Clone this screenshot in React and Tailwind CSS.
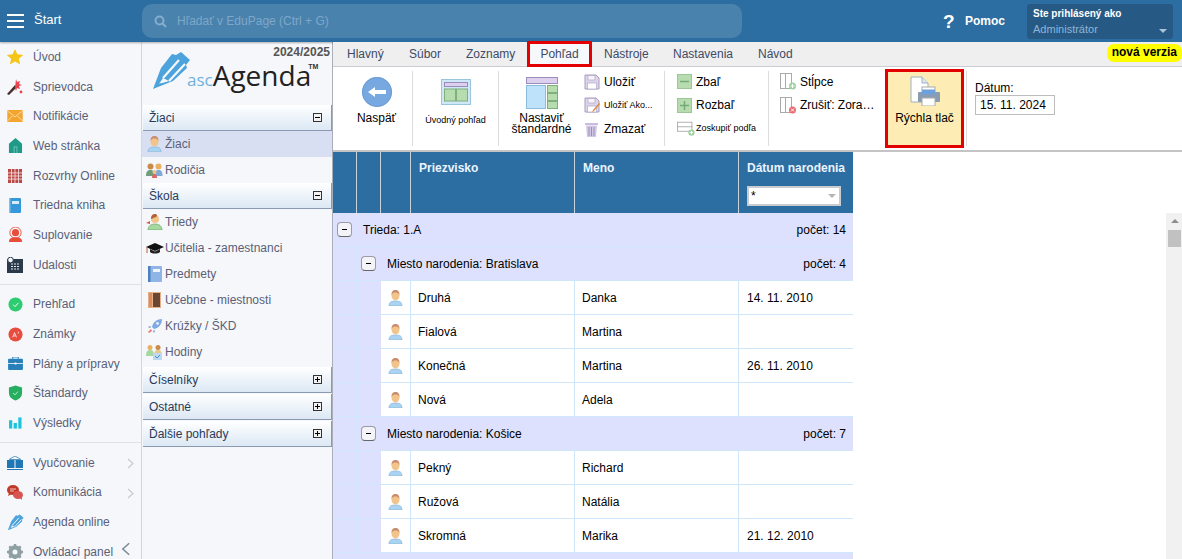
import React from "react";

const Star = () => (
  <svg width="18" height="18" viewBox="0 0 18 18"><path d="M9 1l2.4 5.3 5.8.6-4.3 3.9 1.2 5.7L9 13.6l-5.1 2.9 1.2-5.7L.8 6.9l5.8-.6z" fill="#f5c518" /></svg>
);
const Wand = () => (
  <svg width="18" height="18" viewBox="0 0 18 18"><path d="M1 16L9 7l2 2-8 8z" fill="#4a2c2a" /><path d="M10 1l1 3 3-1-1 3 3 1-3 1 1 3-3-1-1 3-1-3" fill="#e8434f" /><circle cx="15" cy="14" r="1.4" fill="#e8434f" /></svg>
);
const Mail = () => (
  <svg width="16" height="12" viewBox="0 0 18 14"><rect width="18" height="14" fill="#f3a530" /><path d="M0 1l9 7 9-7M0 13l6-6M18 13l-6-6" stroke="#fde3b0" fill="none" /></svg>
);
const House = () => (
  <svg width="15" height="15" viewBox="0 0 16 16"><path d="M8 0l7 6v10H1V6z" fill="#1e9a86" /><rect x="6" y="9" width="4" height="7" fill="#6fc4b6" /><rect x="7" y="10" width="2" height="6" fill="#1e9a86" /></svg>
);
const Timetable = () => (
  <svg width="14" height="14" viewBox="0 0 16 16"><rect width="16" height="16" fill="#b94a48" /><path d="M0 4.5h16M0 8h16M0 11.500h16M4 0v16M8 0v16M12 0v16" stroke="#f6dcdc" /></svg>
);
const Notebook = () => (
  <svg width="12" height="15" viewBox="0 0 12 15"><rect width="12" height="15" rx="1" fill="#3498db" /><rect x="3" y="3" width="7" height="3" fill="#d6ecfa" /><rect x="0" y="0" width="1.500" height="15" fill="#7cc0ee" /></svg>
);
const Substitute = () => (
  <svg width="15" height="15" viewBox="0 0 16 16"><circle cx="8" cy="6" r="6" fill="none" stroke="#e74c3c" /><circle cx="8" cy="6" r="3.800" fill="#e74c3c" /><path d="M1 16c0-4 3-5 7-5s7 1 7 5z" fill="#e74c3c" /></svg>
);
const CalendarDark = () => (
  <svg width="16" height="16" viewBox="0 0 16 16"><rect y="2" width="16" height="14" fill="#2b3a4a" /><path d="M4 7h9M4 9.500h9M4 12h9" stroke="#dfe6ec" strokeDasharray="2 1" /><circle cx="3.500" cy="3" r="2.800" fill="#f5f7fa" stroke="#2b3a4a" /></svg>
);
const CheckCircle = () => (
  <svg width="15" height="15" viewBox="0 0 16 16"><circle cx="8" cy="8" r="7.500" fill="#2ecc71" /><path d="M5.500 8.200l2 2 3.500-4" stroke="#fff" fill="none" /></svg>
);
const GradeCircle = () => (
  <svg width="15" height="15" viewBox="0 0 16 16"><circle cx="8" cy="8" r="7.500" fill="#e74c3c" /><path d="M5 11l2-5 2 5M6 9.500h2M11 5v2" stroke="#fde" fill="none" /></svg>
);
const Briefcase = () => (
  <svg width="15" height="13" viewBox="0 0 16 14"><path d="M5 2V0h6v2" fill="none" stroke="#2980b9" /><rect y="2" width="16" height="12" rx="1" fill="#2980b9" /><path d="M0 7h16" stroke="#d6ecfa" /><rect x="7" y="6" width="2" height="2" fill="#fff" /></svg>
);
const Shield = () => (
  <svg width="15" height="16" viewBox="0 0 16 16"><path d="M8 0l7 2v6c0 4-3 6.500-7 8-4-1.500-7-4-7-8V2z" fill="#27ae60" /><path d="M5.500 8l2 2 3-3.500" stroke="#bdf0d2" fill="none" /></svg>
);
const Bars = () => (
  <svg width="13" height="12" viewBox="0 0 14 12"><rect y="3" width="3.500" height="9" fill="#1cc3dc" /><rect x="5" y="6" width="3.500" height="6" fill="#1cc3dc" /><rect x="10" width="3.500" height="12" fill="#1cc3dc" /></svg>
);
const BookOpen = () => (
  <svg width="16" height="14" viewBox="0 0 16 14"><path d="M8 0l6 3.500H2z" fill="none" stroke="#5a9ac8" /><path d="M0 4h7.500v8H0zM8.500 4H16v8H8.500z" fill="#1f78b4" /><path d="M0 13.500h16" stroke="#1f78b4" /></svg>
);
const Bubbles = () => (
  <svg width="16" height="15" viewBox="0 0 16 15"><ellipse cx="6" cy="5" rx="6" ry="5" fill="#c0392b" /><path d="M2 8l-1 3 4-2z" fill="#c0392b" /><ellipse cx="11" cy="10" rx="5" ry="4" fill="#d9534f" /><path d="M13 13l2 2v-3z" fill="#d9534f" /><path d="M3 4h6M3 6h4" stroke="#f5c6c2" /></svg>
);
const Pencil = ({ size = 40 }) => (
  <svg width={size} height={size} viewBox="0 0 40 40">
    <path d="M2 38L10 17 21 3l4 1 5-3 9 8-4 5 1 3-14 13z" fill="#4da3dc" />
    <path d="M12 27L28 9M18 30L34 13" stroke="#f5f7fa" strokeWidth="2.200" fill="none" />
    <path d="M8 33l4-6 6 3z" fill="#f5f7fa" />
    <path d="M7 35l2-3 2 1z" fill="#4da3dc" />
  </svg>
);
const Gear = () => (
  <svg width="16" height="16" viewBox="0 0 16 16"><circle cx="8" cy="8" r="5" fill="none" stroke="#8fa0a4" strokeWidth="3.500" /><path d="M8 0v16M0 8h16M2.300 2.300l11.400 11.400M13.700 2.300L2.300 13.700" stroke="#8fa0a4" strokeWidth="2.400" /><circle cx="8" cy="8" r="2.500" fill="#f5f7fa" /></svg>
);

const Person = ({ shirt = "#a9d3f0", skin = "#f0c48a", hair = "#c98a6a" }) => (
  <svg width="15" height="16" viewBox="0 0 15 16">
    <path d="M1 16c0-4 2-5 6.500-5S14 12 14 16z" fill={shirt} stroke="#7fb0d4" strokeWidth=".6" />
    <ellipse cx="7.500" cy="5.500" rx="4" ry="5" fill={skin} />
    <path d="M3.500 5C3.500 1 5.500 0 7.500 0s4 1 4 5c-1-2-2-2.500-4-2.500S4.500 3 3.500 5z" fill={hair} />
  </svg>
);
const Parents = () => (
  <svg width="17" height="15" viewBox="0 0 17 15"><circle cx="4.500" cy="3.500" r="3" fill="#c98a4a" /><path d="M0 13c0-5 2-6 4.500-6S8 8 8 13z" fill="#6f9f7a" /><circle cx="12.500" cy="3.500" r="3" fill="#e8b060" /><path d="M9 13c0-5 1-6 3.500-6S16.500 8 16.500 13z" fill="#7fa9d9" /><circle cx="8.500" cy="9" r="2" fill="#f0c48a" /><path d="M6 15c0-3 1-4 2.500-4s2.500 1 2.500 4z" fill="#e06666" /></svg>
);
const Teacher = () => (
  <svg width="17" height="16" viewBox="0 0 17 16"><circle cx="9" cy="5" r="4" fill="#f0c48a" /><path d="M5 5c0-4 2-5 4-5s3 2 1 3-3 1-5 2z" fill="#b5623a" /><path d="M2 16c0-4 3-6 7-6s7 2 7 6z" fill="#a6d9a0" stroke="#5a9a55" strokeWidth=".6" /><path d="M0 9l4-2v3z" fill="#d9534f" /></svg>
);
const GradCap = () => (
  <svg width="18" height="13" viewBox="0 0 18 13"><path d="M0 5l9-4 9 4-9 4z" fill="#111" /><path d="M4 7v3c2 2 8 2 10 0V7L9 9.500z" fill="#222" /><path d="M1 5v6" stroke="#b5623a" /></svg>
);
const Book = () => (
  <svg width="14" height="16" viewBox="0 0 14 16"><rect width="14" height="16" rx="1" fill="#8fb4e6" /><rect width="2.500" height="16" fill="#4f7fc0" /><rect x="5" y="3" width="7" height="3" fill="#eef4fc" /></svg>
);
const Door = () => (
  <svg width="13" height="16" viewBox="0 0 13 16"><rect width="13" height="16" fill="#e7b08a" /><rect x="5" y="1" width="7" height="14" fill="#6b4630" /><rect x="1" y="1" width="3" height="14" fill="#d98d5f" /></svg>
);
const Rocket = () => (
  <svg width="16" height="16" viewBox="0 0 16 16"><path d="M15 1c-5 0-9 3-10 8l2 2c5-1 8-5 8-10z" fill="#7fa9e6" /><circle cx="10.500" cy="5.500" r="1.400" fill="#e8f0fc" /><path d="M4 8L1 9l2 1zM8 12l-1 3-1-2z" fill="#5d89cf" /><path d="M4 11l-3 3 1 1 3-2z" fill="#e8796a" /></svg>
);
const Lessons = () => (
  <svg width="17" height="16" viewBox="0 0 17 16"><circle cx="4" cy="3.500" r="2.500" fill="#e8b060" /><circle cx="12" cy="3.500" r="2.500" fill="#c98a4a" /><path d="M0 12c0-5 1.500-6 4-6s4 1 4 6z" fill="#a6d9a0" /><path d="M8 12c0-5 1.500-6 4-6s4 1 4 6z" fill="#e8c98a" /><rect x="7" y="9" width="9" height="7" fill="#bcd8f2" /><path d="M9 12l2 2 3-3" stroke="#4a8fd0" fill="none" /></svg>
);

const navGroups = [
  [
    ["Úvod", <Star />],
    ["Sprievodca", <Wand />],
    ["Notifikácie", <Mail />],
    ["Web stránka", <House />],
    ["Rozvrhy Online", <Timetable />],
    ["Triedna kniha", <Notebook />],
    ["Suplovanie", <Substitute />],
    ["Udalosti", <CalendarDark />],
  ],
  [
    ["Prehľad", <CheckCircle />],
    ["Známky", <GradeCircle />],
    ["Plány a prípravy", <Briefcase />],
    ["Štandardy", <Shield />],
    ["Výsledky", <Bars />],
  ],
  [
    ["Vyučovanie", <BookOpen />, true],
    ["Komunikácia", <Bubbles />, true],
    ["Agenda online", <Pencil size={17} />],
    ["Ovládací panel", <Gear />],
  ],
];

const Chevron = ({ big }) => (
  <svg width={big ? 10 : 7} height={big ? 14 : 11} viewBox="0 0 7 11" fill="none" stroke={big ? "#7c8a96" : "#c6ccd2"} strokeWidth="1.200"><path d={big ? "M6 1L1 5.500 6 10" : "M1 1l5 4.500L1 10"} /></svg>
);

const SideNav = () => (
  <div className="w-[142px] shrink-0 h-full bg-[#f5f7fa] border-r border-[#d4d7da] text-[12px] text-[#5b5f78]">
    {navGroups.map((group, i) => (
      <div key={i} className={i > 0 ? "border-t border-[#dfe2e5] mt-[4px] pt-[5px]" : ""}>
        {group.map(([label, icon, arrow]) => (
          <div key={label} className="relative flex items-center h-[29.7px]">
            <span className="w-[33px] shrink-0 flex justify-center pr-[3px]">{icon}</span>
            <span className="whitespace-nowrap">{label}</span>
            {arrow && (
              <span className="absolute left-[127px] top-[10px]"><Chevron /></span>
            )}
            {label === "Ovládací panel" && (
              <span className="absolute left-[121px] top-[5px]"><Chevron big /></span>
            )}
          </div>
        ))}
      </div>
    ))}
  </div>
);

const Toggle = ({ open }) => (
  <span className="w-[7px] h-[7px] border border-[#333] bg-[#f2f2f2] relative block box-content">
    <span className="absolute left-[1px] right-[1px] top-[3px] h-px bg-black" />
    {!open && <span className="absolute top-[1px] bottom-[1px] left-[3px] w-px bg-black" />}
  </span>
);

const PanelHead = ({ label, open, className = "" }) => (
  <div className={`h-[26px] pl-[6px] pr-[3px] ml-px flex items-center justify-between text-[12px] text-[#283a5a] bg-gradient-to-b from-white to-[#dce8f4] border-b border-r border-[#8a9ab0] ${className}`}>
    <span>{label}</span>
    <span className="mr-[6px]"><Toggle open={open} /></span>
  </div>
);

const PanelItem = ({ label, icon, active }) => (
  <div className={`h-[26px] flex items-center text-[12px] text-[#5b5f78] ${active ? "bg-[#d8dff3]" : ""}`}>
    <span className="w-[23px] shrink-0 flex justify-center pl-[2px]">{icon}</span>
    <span className="whitespace-nowrap">{label}</span>
  </div>
);

const Logo = () => (
  <div className="relative h-[63px]">
    <span className="absolute right-[2px] top-[3px] text-[12px] font-bold text-[#555] leading-[14px]">2024/2025</span>
    <div className="absolute left-[9px] top-[9px] flex items-end">
      <Pencil />
      <span className="text-[#6fb0e0] text-[17px] leading-[20px] -ml-[4px] mb-[1px] font-['Open_Sans',sans-serif]">asc</span>
      <span className="text-[#222] text-[28px] leading-[24px] mb-[4px] font-['Open_Sans',sans-serif]">Agenda</span>
      <span className="text-[#333] text-[7px] font-bold self-start mt-[11px] leading-[9px] -ml-[3px]">TM</span>
    </div>
  </div>
);

const Panel = () => (
  <div className="w-[191px] shrink-0 h-full bg-[#f5f7fa] border-r border-[#a9aeb8]">
    <Logo />
    <PanelHead label="Žiaci" open />
    <PanelItem label="Žiaci" icon={<Person />} active />
    <PanelItem label="Rodičia" icon={<Parents />} />
    <PanelHead label="Škola" open />
    <PanelItem label="Triedy" icon={<Teacher />} />
    <PanelItem label="Učitelia - zamestnanci" icon={<GradCap />} />
    <PanelItem label="Predmety" icon={<Book />} />
    <PanelItem label="Učebne - miestnosti" icon={<Door />} />
    <PanelItem label="Krúžky / ŠKD" icon={<Rocket />} />
    <PanelItem label="Hodiny" icon={<Lessons />} />
    <div className="h-[2px]" />
    <PanelHead label="Číselníky" className="mb-px" />
    <PanelHead label="Ostatné" className="mb-px" />
    <PanelHead label="Ďalšie pohľady" />
  </div>
);

const tabs = [
  ["Hlavný", "ml-[14px] w-[62px]"],
  ["Súbor", "w-[57px]"],
  ["Zoznamy", "w-[61px]"],
];

const Tabs = () => (
  <div className="relative h-[25px] bg-[#efefef] border-b border-[#c9ccd0] flex items-center text-[12px] text-[#3e4a66]">
    {tabs.map(([t, c]) => (
      <span key={t} className={`${c} shrink-0`}>{t}</span>
    ))}
    <span className="w-[65px] h-[26px] shrink-0 border-[3px] border-[#e30000] bg-[#f7f8fc] flex items-center justify-center">Pohľad</span>
    <span className="ml-[12px] w-[69px] shrink-0">Nástroje</span>
    <span className="w-[85px] shrink-0">Nastavenia</span>
    <span>Návod</span>
    <span className="absolute right-0 top-[2px] h-[18px] px-[5px] rounded-[7px] bg-[#ffff00] text-black font-bold text-[12px] leading-[16px]">nová verzia</span>
  </div>
);

const Sep = () => <div className="w-px h-[75px] bg-[#dcdcdc] shrink-0 mt-[4px]" />;

const BackIcon = () => (
  <svg width="30" height="30" viewBox="0 0 30 30"><circle cx="15" cy="15" r="15" fill="#78a8e0" /><circle cx="15" cy="15" r="14.500" fill="none" stroke="#6c9cd4" /><path d="M6 15l7-5v3h11v4H13v3z" fill="#fff" /></svg>
);
const LayoutIcon = () => (
  <svg width="30" height="26" viewBox="0 0 30 26"><rect x=".5" y=".5" width="29" height="25" fill="#cfe8f8" stroke="#9cc4dc" /><rect x="3.500" y="3.500" width="23" height="4" fill="#dcd0ee" stroke="#9a8dbb" /><rect x="3.500" y="10" width="11" height="12" fill="#b6dcb0" stroke="#7fb07a" /><rect x="15.500" y="10" width="11" height="12" fill="#b6dcb0" stroke="#7fb07a" /></svg>
);
const StandardIcon = () => (
  <svg width="32" height="32" viewBox="0 0 32 32"><rect x=".5" y=".5" width="31" height="6" fill="#dcd0ee" stroke="#9a8dbb" /><rect x=".5" y="8.500" width="19" height="23" fill="#bfe2fb" stroke="#8cbcdc" /><rect x="21.500" y="8.500" width="10" height="7" fill="#b6dcb0" stroke="#7fb07a" /><rect x="21.500" y="16.500" width="10" height="7" fill="#b6dcb0" stroke="#7fb07a" /><rect x="21.500" y="24.500" width="10" height="7" fill="#b6dcb0" stroke="#7fb07a" /></svg>
);
const Floppy = ({ edit }) => (
  <svg width="16" height="16" viewBox="0 0 16 16"><path d="M1 1h11l3 3v11H1z" fill="#ddd6ea" stroke="#a89cc0" /><rect x="4" y="1.500" width="7" height="4.500" fill="#f6f4fa" stroke="#a89cc0" strokeWidth=".6" /><rect x="3.500" y="9" width="9" height="6" fill="#fff" stroke="#a89cc0" strokeWidth=".6" />{edit && <path d="M9 13l6-7 1 1-6 7-2 1z" fill="#d98a3a" />}</svg>
);
const Trash = () => (
  <svg width="15" height="16" viewBox="0 0 15 16"><rect x="1" y="2" width="13" height="2" fill="#c9bcdc" /><path d="M2 4.500h11L12 16H3z" fill="#d3c8e4" /><path d="M5 6v9M7.500 6v9M10 6v9" stroke="#9a8dbb" /></svg>
);
const SquareBtn = ({ plus }) => (
  <svg width="15" height="15" viewBox="0 0 15 15"><rect x=".5" y=".5" width="14" height="14" fill="#b6dcb0" stroke="#9cc69a" /><path d={plus ? "M3 7.500h9M7.500 3v9" : "M3 7.500h9"} stroke="#78a878" strokeWidth="1.500" /></svg>
);
const GroupIcon = () => (
  <svg width="21" height="16" viewBox="0 0 21 16"><rect x=".5" y=".5" width="16" height="10" fill="#fff" stroke="#aaa" /><path d="M0 5.500h17" stroke="#aaa" /><circle cx="16" cy="12" r="3.500" fill="#9ed0a0" /><path d="M14 12h4M16 10v4" stroke="#fff" /></svg>
);
const ColumnsIcon = ({ red }) => (
  <svg width="16" height="17" viewBox="0 0 16 17"><rect x=".5" y=".5" width="5" height="15" fill="#fff" stroke="#aaa" /><rect x="5.500" y=".5" width="6" height="15" fill="#fff" stroke="#aaa" /><circle cx="12.500" cy="13" r="3.500" fill={red ? "#ea6a72" : "#9ed0a0"} /><path d={red ? "M11 11.500l3 3M14 11.500l-3 3" : "M10.500 13h4M12.500 11v4"} stroke="#fff" /></svg>
);
const PrintIcon = () => (
  <svg width="30" height="30" viewBox="0 0 30 30"><path d="M1 1h11l6 6v19H1z" fill="#fff" stroke="#9bb0c4" /><path d="M12 1v6h6" fill="#dfe8f2" stroke="#9bb0c4" /><rect x="12" y="11" width="13" height="6" fill="#fff" stroke="#aaa" /><rect x="8" y="16" width="22" height="10" rx="1" fill="#8a9cb0" /><rect x="12" y="13.500" width="13" height="5" fill="#6ea0dc" /><rect x="12" y="22" width="13" height="8" fill="#fff" stroke="#aaa" /></svg>
);

const SmallRow = ({ icon, label, small, iconW = "w-[22px]" }) => (
  <div className="flex items-center h-[23.5px]">
    <span className={`${iconW} shrink-0 flex justify-start`}>{icon}</span>
    <span className={`whitespace-nowrap ${small ? "text-[9px]" : "text-[12px]"}`}>{label}</span>
  </div>
);

const Ribbon = () => (
  <div className="h-[85px] bg-white border-b-[2px] border-[#c4c4c4] flex items-start text-black">
    <div className="w-[79px] shrink-0 flex flex-col items-center pt-[10px] pl-[8px]">
      <BackIcon />
      <span className="text-[12px] mt-[4px] leading-[14px]">Naspäť</span>
    </div>
    <Sep />
    <div className="w-[85px] shrink-0 flex flex-col items-center pt-[12px]">
      <LayoutIcon />
      <span className="text-[9px] mt-[9px] leading-[12px] whitespace-nowrap">Úvodný pohľad</span>
    </div>
    <Sep />
    <div className="w-[83px] shrink-0 flex flex-col items-center pt-[10px] pl-[2px]">
      <StandardIcon />
      <span className="text-[12px] mt-[4px] leading-[11px] text-center">Nastaviť<br />štandardné</span>
    </div>
    <div className="w-[82px] shrink-0 pt-[3px] pl-[2px]">
      <SmallRow icon={<Floppy />} label="Uložiť" iconW="w-[20px]" />
      <SmallRow icon={<Floppy edit />} label="Uložiť Ako..." small iconW="w-[20px]" />
      <SmallRow icon={<Trash />} label="Zmazať" iconW="w-[20px]" />
    </div>
    <Sep />
    <div className="w-[103px] shrink-0 pt-[3px] pl-[12px]">
      <SmallRow icon={<SquareBtn />} label="Zbaľ" iconW="w-[19px]" />
      <SmallRow icon={<SquareBtn plus />} label="Rozbaľ" iconW="w-[19px]" />
      <SmallRow icon={<GroupIcon />} label="Zoskupiť podľa" small iconW="w-[19px]" />
    </div>
    <Sep />
    <div className="w-[116px] shrink-0 pt-[3px] pl-[11px]">
      <SmallRow icon={<ColumnsIcon />} label="Stĺpce" iconW="w-[20px]" />
      <SmallRow icon={<ColumnsIcon red />} label="Zrušiť: Zora…" iconW="w-[20px]" />
    </div>
    <div className="w-[79px] h-[79px] mt-[2px] shrink-0 border-[3px] border-[#e30000] bg-[#fdedb4] flex flex-col items-center pt-[4px]">
      <PrintIcon />
      <span className="text-[12px] mt-[5px] leading-[14px] whitespace-nowrap">Rýchla tlač</span>
    </div>
    <div className="w-px h-[75px] bg-[#dcdcdc] shrink-0 mt-[4px] ml-[2px]" />
    <div className="pl-[8px] pt-[15px] text-[12px]">
      <div className="leading-[13px]">Dátum:</div>
      <div className="w-[80px] h-[20px] border border-[#bdbdbd] pl-[4px] leading-[18px]">15. 11. 2024</div>
    </div>
  </div>
);

const headCols = ["w-[24px]", "w-[24px]", "w-[30px]"];

const TableHead = () => (
  <div className="flex h-[61px] bg-[#2d6ea2] text-[#eaf4ff] text-[12px] font-bold">
    {headCols.map((w, i) => (
      <div key={i} className={`${w} shrink-0 border-r border-[#c9d3dc]`} />
    ))}
    <div className="w-[164px] shrink-0 border-r border-[#c9d3dc] pl-[8px] pt-[9px] leading-[15px]">Priezvisko</div>
    <div className="w-[164px] shrink-0 border-r border-[#c9d3dc] pl-[8px] pt-[9px] leading-[15px]">Meno</div>
    <div className="flex-1 pl-[8px] pt-[9px] leading-[15px] whitespace-nowrap">
      Dátum narodenia
      <div className="relative w-[94px] h-[20px] mt-[10px] bg-white border-[2px] border-[#c8ccd0] text-black font-normal pl-[2px] pt-[1px] leading-[14px]">
        *
        <span className="absolute right-[3px] top-[6px] w-0 h-0 border-x-[4px] border-x-transparent border-t-[4px] border-t-[#b5b5b5]" />
      </div>
    </div>
  </div>
);

const Minus = () => (
  <span className="w-[15px] h-[15px] rounded-[4px] bg-[#f4f4f8] border border-[#9a9aa8] border-b-[#666] flex items-center justify-center shrink-0">
    <span className="w-[5px] h-px bg-black" />
  </span>
);

const Group = ({ label, count, level }) => (
  <div className="flex items-center h-[34px] bg-[#dde1fd] border-b border-[#cfe6fb] text-[12px] text-black">
    {level === 1 && <div className="w-[24px] h-full shrink-0 border-r border-[#cfe6fb]" />}
    <span className="ml-[4px]"><Minus /></span>
    <span className="ml-[11px]">{label}</span>
    <span className="ml-auto mr-[7px]">počet: {count}</span>
  </div>
);

const Row = ({ last, first, date }) => (
  <div className="flex h-[34px] text-[12px] text-black bg-white border-b border-[#cfe6fb]">
    <div className="w-[24px] shrink-0 bg-[#dde1fd] border-r border-[#cfe6fb]" />
    <div className="w-[24px] shrink-0 bg-[#dde1fd]" />
    <div className="w-[30px] shrink-0 border-r border-[#cfe6fb] flex items-center justify-center"><Person /></div>
    <div className="w-[164px] shrink-0 border-r border-[#cfe6fb] pl-[7px] flex items-center">{last}</div>
    <div className="w-[164px] shrink-0 border-r border-[#cfe6fb] pl-[7px] flex items-center">{first}</div>
    <div className="flex-1 pl-[8px] flex items-center">{date}</div>
  </div>
);

const Table = () => (
  <div className="w-[520px] shrink-0">
    <TableHead />
    <Group label="Trieda: 1.A" count="14" level={0} />
    <Group label="Miesto narodenia: Bratislava" count="4" level={1} />
    <Row last="Druhá" first="Danka" date="14. 11. 2010" />
    <Row last="Fialová" first="Martina" />
    <Row last="Konečná" first="Martina" date="26. 11. 2010" />
    <Row last="Nová" first="Adela" />
    <Group label="Miesto narodenia: Košice" count="7" level={1} />
    <Row last="Pekný" first="Richard" />
    <Row last="Ružová" first="Natália" />
    <Row last="Skromná" first="Marika" date="21. 12. 2010" />
    <div className="h-[34px] bg-[#dde1fd]" />
  </div>
);

const Scrollbar = () => (
  <div className="w-[16px] mt-[61px] bg-[#f1f1f1] flex flex-col items-center shrink-0 pt-[6px] pl-[1px]">
    <span className="w-0 h-0 border-x-[4px] border-x-transparent border-b-[4px] border-b-[#8e8e8e]" />
    <span className="w-[13px] h-[17px] bg-[#c1c1c1] mt-[7px]" />
  </div>
);

const TopBar = () => (
  <div className="h-[42px] shrink-0 bg-[#2d6ea2] flex items-center text-white shadow-[0_1px_2px_rgba(0,0,0,0.3)] relative">
    <div className="w-[142px] shrink-0 flex items-center pl-[7px]">
      <div className="w-[17px] flex flex-col gap-[4px] mr-[10px]">
        <span className="h-[2px] bg-white block" />
        <span className="h-[2px] bg-white block" />
        <span className="h-[2px] bg-white block" />
      </div>
      <span className="text-[13px] -mt-[2px]">Štart</span>
    </div>
    <div className="w-[600px] h-[34px] rounded-[10px] bg-[#4a82ae] flex items-center pl-[12px] text-[12px] text-[#7ea7c8] shrink-0">
      <svg width="13" height="13" viewBox="0 0 13 13" fill="none" stroke="#86adcb" strokeWidth="2"><circle cx="5.500" cy="5.500" r="4" /><path d="M8.500 8.500L12 12" /></svg>
      <span className="ml-[10px]">Hľadať v EduPage (Ctrl + G)</span>
    </div>
    <span className="ml-[201px] text-[19px] font-bold leading-none w-[21px]">?</span>
    <span className="text-[12px] font-bold ml-[1px]">Pomoc</span>
    <div className="relative ml-[22px] w-[146px] h-[35px] rounded-[3px] bg-[#265a85] pl-[6px] pt-[3px] leading-[14px]">
      <div className="font-bold text-[10px]">Ste prihlásený ako</div>
      <div className="text-[#8fb4d6] text-[11px] leading-[16px]">Administrátor</div>
      <span className="absolute right-[6px] bottom-[6px] w-0 h-0 border-x-[4px] border-x-transparent border-t-[4px] border-t-[#aac4da]" />
    </div>
  </div>
);

export default function App() {
  return (
    <div className="w-[1182px] h-[559px] overflow-hidden flex flex-col bg-white font-['Liberation_Sans',Arial,sans-serif]">
      <TopBar />
      <div className="flex flex-1 min-h-0">
        <SideNav />
        <Panel />
        <div className="flex-1 min-w-0 flex flex-col">
          <Tabs />
          <Ribbon />
          <div className="flex flex-1 min-h-0 justify-between">
            <Table />
            <Scrollbar />
          </div>
        </div>
      </div>
    </div>
  );
}
